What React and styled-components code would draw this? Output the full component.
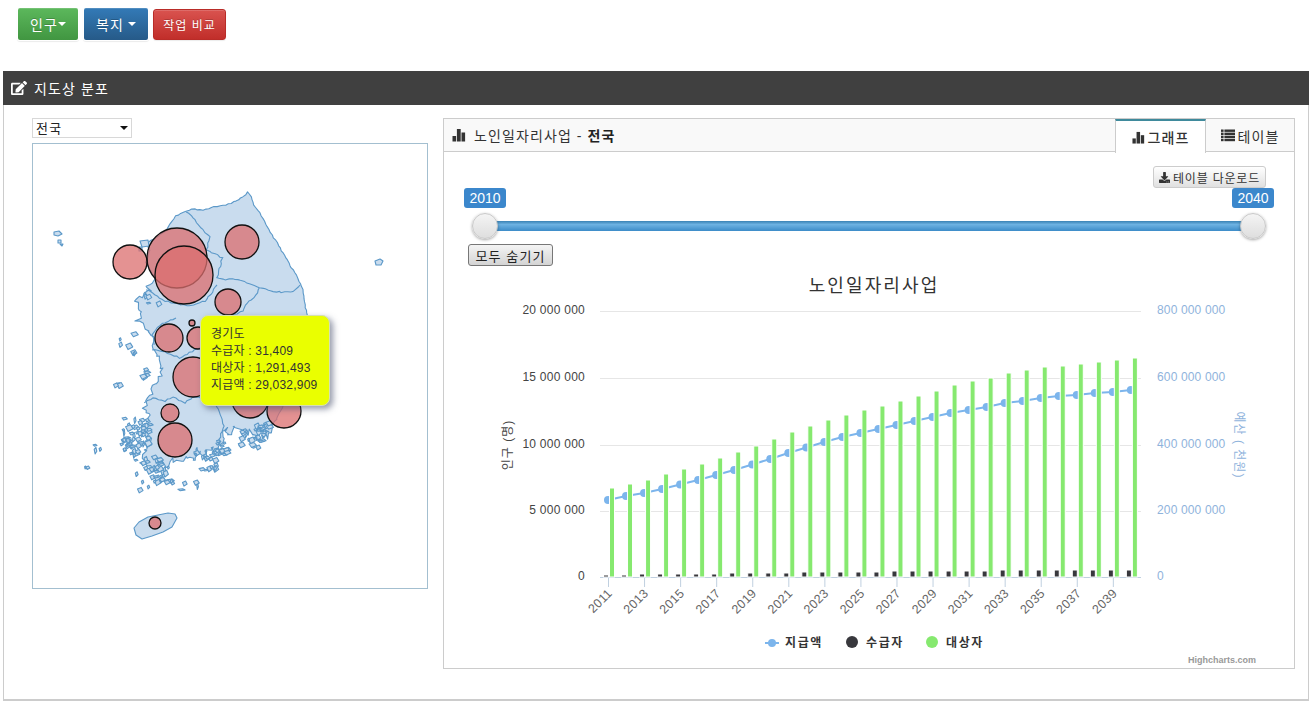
import React from "react";
import styled, { createGlobalStyle } from "styled-components";
import { FaEdit, FaDownload } from "react-icons/fa";

const FONT = `"Liberation Sans", "Noto Sans CJK KR", Arial, sans-serif`;

const GlobalStyle = createGlobalStyle`
  html, body {
    margin: 0;
    background: #fff;
    font-family: ${FONT};
    color: #333;
    overflow: hidden;
  }
  * { box-sizing: border-box; }
`;

const YEARS = Array.from({ length: 30 }, (_, i) => 2011 + i);
const GREEN_TOP = [488, 484, 480, 474, 469, 464, 458, 452, 446, 439, 432, 426, 420, 415, 410, 406, 401, 396, 391, 385, 381, 378, 373, 370, 367, 366, 364, 362, 360, 358];
const LINE_Y = [500, 496, 493, 489, 484.5, 480, 475, 470, 464.5, 459, 453, 447.5, 442, 437, 433, 429, 425, 421, 417, 413, 410, 407, 403, 401, 398, 396, 395, 393, 392, 390];
const DARK_H = [2, 2, 3, 3, 3, 3, 3, 4, 4, 4, 4, 5, 5, 5, 5, 5, 6, 6, 6, 6, 6, 6, 7, 7, 7, 7, 7, 7, 7, 7];
const LEFT_TICKS = [["20 000 000", 311], ["15 000 000", 378], ["10 000 000", 445], ["5 000 000", 511], ["0", 577]];
const RIGHT_TICKS = [["800 000 000", 311], ["600 000 000", 378], ["400 000 000", 445], ["200 000 000", 511], ["0", 577]];

const colX = (i) => 608 + i * 18.03;

const BUBBLES = [
  [177, 258, 30], [184, 275, 29], [130, 262, 17], [242, 242, 17], [228, 302, 13],
  [169, 338, 14], [192, 323, 3], [198, 338, 11], [193, 377, 20], [250, 400, 18],
  [284, 411, 17], [170, 413, 9], [175, 440, 17], [155, 523, 6],
];

const MAINLAND = [
  [248, 192], [251, 197], [254, 205], [260, 213], [266, 224], [272, 235], [277, 243], [283, 253], [290, 265], [296, 275],
  [302, 287], [304, 296], [306, 310], [309, 325], [311, 345], [309, 362], [306, 378], [300, 390], [293, 397], [285, 402],
  [279, 414], [273, 424], [270, 433], [266, 437], [262, 431], [257, 436], [250, 431], [245, 437], [240, 429], [234, 426],
  [229, 436], [226, 428], [221, 441], [216, 451], [211, 446], [205, 458], [199, 453], [194, 461], [188, 456], [181, 463],
  [172, 460], [166, 467], [160, 461], [154, 470], [146, 463], [142, 457], [146, 450], [150, 440], [146, 430], [150, 417],
  [143, 407], [152, 397], [150, 390], [157, 380], [162, 373], [158, 358], [155, 350], [150, 333], [137, 320], [142, 315],
  [135, 302], [150, 290], [146, 288], [152, 283], [155, 278], [150, 270], [146, 262], [150, 250], [146, 243], [156, 238],
  [166, 231], [170, 224], [176, 216], [183, 212], [192, 209], [203, 210], [214, 207], [226, 205], [236, 201], [243, 197],
];

const BORDERS = [
  [[187, 212], [195, 220], [203, 230], [210, 237], [207, 250], [222, 258], [217, 277], [225, 280], [232, 278], [247, 283], [260, 287], [273, 292], [293, 292], [300, 285]],
  [[147, 290], [165, 301], [178, 304], [190, 306], [205, 301], [217, 285]],
  [[260, 288], [254, 298], [247, 303], [243, 311], [232, 316], [220, 312]],
  [[153, 350], [165, 352], [180, 358], [195, 350], [205, 345]],
  [[145, 403], [153, 398], [165, 401], [173, 397], [185, 403], [193, 397], [210, 400]],
  [[212, 400], [220, 412], [224, 426], [218, 445]],
  [[155, 345], [152, 335], [160, 325], [176, 318]],
];

const JEJU = "M134 528 L139 522 L148 517 L158 515 L168 513 L175 514 L177 518 L172 527 L163 532 L152 536 L142 539 L136 535 Z";

// small island clusters off the west and south coast: cx, cy, spread, count
const CLUSTERS = [
  [134, 432, 14, 44], [128, 446, 8, 22], [148, 470, 14, 26], [160, 474, 8, 10], [205, 460, 12, 22], [222, 448, 8, 12],
  [250, 436, 12, 26], [262, 428, 6, 12], [150, 300, 8, 5], [143, 370, 6, 6], [131, 352, 5, 3], [125, 340, 7, 4],
  [118, 385, 5, 3], [96, 448, 4, 3], [85, 468, 2, 2], [196, 484, 3, 2], [175, 488, 8, 4], [142, 484, 6, 3],
];

const FAR_ISLES = [
  "M54 232 L59 231 L62 234 L58 236 L54 235 Z",
  "M58 240 L61 240 L61 243 L58 243 Z",
  "M60 244 L63 244 L62 246 Z",
  "M375 261 L380 259 L383 261 L381 265 L376 265 Z",
  "M139 247 L142 247 L142 251 L139 251 Z",
  "M140 241 L148 240 L149 246 L142 247 Z",
];

const makeRandom = (start) => {
  let seed = start;
  return () => {
    seed = (seed * 16807) % 2147483647;
    return seed / 2147483647;
  };
};

// breaks long edges into short ones so the outline looks like a real coast
const roughen = (points, closed, ampAt) => {
  const rnd = makeRandom(11);
  const out = [];
  const last = closed ? points.length : points.length - 1;
  for (let i = 0; i < last; i++) {
    const [ax, ay] = points[i];
    const [bx, by] = points[(i + 1) % points.length];
    const steps = Math.max(1, Math.round(Math.hypot(bx - ax, by - ay) / 3));
    for (let s = 0; s < steps; s++) {
      const x = ax + ((bx - ax) * s) / steps;
      const y = ay + ((by - ay) * s) / steps;
      const amp = ampAt(x, y);
      out.push(`${(x + (rnd() - 0.5) * amp).toFixed(1)} ${(y + (rnd() - 0.5) * amp).toFixed(1)}`);
    }
  }
  if (!closed) out.push(points[last].join(" "));
  return `M${out.join(" L")}${closed ? " Z" : ""}`;
};

const coastAmp = (x, y) => ((x < 235 && y > 285) || y > 415 ? 4.5 : 1);

const islandPaths = () => {
  const rnd = makeRandom(7);
  const out = [];
  CLUSTERS.forEach(([cx, cy, spread, count]) => {
    for (let i = 0; i < count; i++) {
      const x = cx + (rnd() - 0.5) * 2 * spread;
      const y = cy + (rnd() - 0.5) * 2 * spread;
      const w = 1 + rnd() * 4;
      const h = 1 + rnd() * 3;
      out.push(`M${x.toFixed(1)} ${y.toFixed(1)} l${w.toFixed(1)} ${(-h / 2).toFixed(1)} l${(w / 2).toFixed(1)} ${h.toFixed(1)} l${(-w).toFixed(1)} ${(h / 1.4).toFixed(1)} Z`);
    }
  });
  return out;
};

const BarIcon = ({ size = 14 }) => (
  <svg width={size} height={size} viewBox="0 0 13 14" fill="currentColor" aria-hidden="true">
    <rect x="0" y="8" width="3.6" height="5.5" />
    <rect x="4.4" y="1" width="3.8" height="12.5" />
    <rect x="9" y="4.5" width="3.6" height="9" />
  </svg>
);

const RowsIcon = () => (
  <svg width="14" height="13" viewBox="0 0 14 13" fill="currentColor" aria-hidden="true">
    {[0.5, 3.6, 6.7, 9.8].map((y) => (
      <g key={y}>
        <rect x="0" y={y} width="2.6" height="2.4" />
        <rect x="3.4" y={y} width="10.6" height="2.4" />
      </g>
    ))}
  </svg>
);

export default function App() {
  return (
    <>
      <GlobalStyle />
      <Toolbar>
        <MenuButton $tone="green" $width={62}>인구<Caret $gap={0} /></MenuButton>
        <MenuButton $tone="blue" $width={66}>복지<Caret $gap={4} /></MenuButton>
        <CompareButton>작업 비교</CompareButton>
      </Toolbar>

      <Panel>
        <PanelHead>
          <FaEdit size={16} />
          <span>지도상 분포</span>
        </PanelHead>
        <PanelBody>
          <MapColumn>
            <RegionSelect>
              <span>전국</span>
              <SelectArrow />
            </RegionSelect>
            <MapBox>
              <MapSvg viewBox="33 144 394 444">
                <g fill="#c9dcee" stroke="#5b98c8" strokeWidth="1.1" strokeLinejoin="round">
                  <path d={roughen(MAINLAND, true, coastAmp)} />
                  <path d={JEJU} />
                  {FAR_ISLES.map((d) => <path key={d} d={d} />)}
                  {islandPaths().map((d, i) => <path key={i} d={d} />)}
                </g>
                <g fill="none" stroke="#5b98c8" strokeWidth="1.1">
                  {BORDERS.map((points, i) => <path key={i} d={roughen(points, false, () => 1.6)} />)}
                </g>
                <g fill="#db6e6e" fillOpacity="0.75" stroke="#111" strokeWidth="1.3">
                  {BUBBLES.map(([cx, cy, r]) => <circle key={`${cx}-${cy}`} cx={cx} cy={cy} r={r} />)}
                </g>
              </MapSvg>
              <Tooltip>
                <div>경기도</div>
                <div>수급자 : 31,409</div>
                <div>대상자 : 1,291,493</div>
                <div>지급액 : 29,032,909</div>
              </Tooltip>
            </MapBox>
          </MapColumn>

          <ChartPanel>
            <ChartHead>
              <ChartTitle>
                <BarIcon />
                <span>노인일자리사업 - <strong>전국</strong></span>
              </ChartTitle>
              <Tabs>
                <Tab $active><BarIcon size={13} />그래프</Tab>
                <Tab><RowsIcon />테이블</Tab>
              </Tabs>
            </ChartHead>

            <DownloadRow>
              <SmallButton><FaDownload size={11} />테이블 다운로드</SmallButton>
            </DownloadRow>

            <SliderBlock>
              <SliderLabels>
                <SliderLabel>2010</SliderLabel>
                <SliderLabel>2040</SliderLabel>
              </SliderLabels>
              <SliderRail>
                <SliderTrack />
                <Thumb $side="left" />
                <Thumb $side="right" />
              </SliderRail>
              <HideButton>모두 숨기기</HideButton>
            </SliderBlock>

            <ChartSvg viewBox="444 268 850 399">
              <ChartHeading x="874" y="292">노인일자리사업</ChartHeading>

              {LEFT_TICKS.slice(0, 4).map(([, y]) => (
                <line key={y} x1="600" x2="1141" y1={y + 0.5} y2={y + 0.5} stroke="#e6e6e6" />
              ))}
              <line x1="600" x2="1141" y1="577.5" y2="577.5" stroke="#c0d0e0" />
              {YEARS.filter((_, i) => i % 2 === 0).map((year, k) => (
                <line key={year} x1={colX(k * 2) + 0.5} x2={colX(k * 2) + 0.5} y1="577" y2="587" stroke="#c0d0e0" />
              ))}

              {LEFT_TICKS.map(([label, y]) => (
                <LeftTick key={y} x="585" y={y + 3}>{label}</LeftTick>
              ))}
              {RIGHT_TICKS.map(([label, y]) => (
                <RightTick key={y} x="1157" y={y + 3}>{label}</RightTick>
              ))}
              <AxisTitle x="512" y="445" transform="rotate(-90 512 445)">인구 (명)</AxisTitle>
              <AxisTitle $blue x="1235" y="445" transform="rotate(90 1235 445)">예산 ( 천원)</AxisTitle>

              <polyline
                points={LINE_Y.map((y, i) => `${colX(i)},${y}`).join(" ")}
                fill="none"
                stroke="#7cb5ec"
                strokeWidth="2"
              />
              {LINE_Y.map((y, i) => (
                <circle key={i} cx={colX(i)} cy={y} r="4" fill="#7cb5ec" />
              ))}

              {YEARS.map((year, i) => (
                <g key={year} stroke="#fff">
                  <rect x={colX(i) - 4.5} y={577 - DARK_H[i]} width="5" height={DARK_H[i]} fill="#38383d" />
                  <rect x={colX(i) + 1.5} y={GREEN_TOP[i]} width="5" height={577 - GREEN_TOP[i]} fill="#86e96f" />
                </g>
              ))}

              {YEARS.filter((_, i) => i % 2 === 0).map((year, k) => {
                const x = colX(k * 2) + 5;
                return (
                  <YearLabel key={year} x={x} y="594" transform={`rotate(-45 ${x} 594)`}>{year}</YearLabel>
                );
              })}

              <line x1="765" x2="779" y1="643" y2="643" stroke="#7cb5ec" strokeWidth="2" />
              <circle cx="772" cy="643" r="4" fill="#7cb5ec" />
              <LegendText x="785" y="647">지급액</LegendText>
              <circle cx="852" cy="642" r="6" fill="#38383d" />
              <LegendText x="866" y="647">수급자</LegendText>
              <circle cx="932" cy="642" r="6" fill="#86e96f" />
              <LegendText x="946" y="647">대상자</LegendText>

              <Credit x="1256" y="663">Highcharts.com</Credit>
            </ChartSvg>
          </ChartPanel>
        </PanelBody>
      </Panel>
    </>
  );
}

const TONES = {
  green: "linear-gradient(#5cb85c, #419641); border-color: #3e8f3e",
  blue: "linear-gradient(#337ab7, #265a88); border-color: #245580",
};

const Toolbar = styled.div`
  height: 71px;
  padding: 7px 0 0 17px;
  display: flex;
  align-items: flex-start;
  gap: 4px;
`;

const MenuButton = styled.button`
  width: ${(p) => p.$width}px;
  height: 34px;
  padding: 0;
  display: inline-flex;
  align-items: center;
  justify-content: center;
  font: 14px ${FONT};
  letter-spacing: 1px;
  color: #fff;
  background: ${(p) => TONES[p.$tone]};
  border: 1px solid;
  border-radius: 3px;
  text-shadow: 0 -1px 0 rgba(0, 0, 0, 0.2);
  box-shadow: inset 0 1px 0 rgba(255, 255, 255, 0.15), 0 1px 1px rgba(0, 0, 0, 0.08);
`;

const Caret = styled.i`
  width: 0;
  height: 0;
  margin-left: ${(p) => p.$gap}px;
  border-top: 4px solid #fff;
  border-left: 4px solid transparent;
  border-right: 4px solid transparent;
`;

const CompareButton = styled.button`
  width: 73px;
  height: 31px;
  margin-top: 2px;
  padding: 0;
  font: 12px ${FONT};
  letter-spacing: 1px;
  color: #fff;
  background: linear-gradient(#d9534f, #c12e2a);
  border: 1px solid #b92c28;
  border-radius: 3px;
  text-shadow: 0 -1px 0 rgba(0, 0, 0, 0.2);
  box-shadow: inset 0 1px 0 rgba(255, 255, 255, 0.15), 0 1px 1px rgba(0, 0, 0, 0.08);
`;

const Panel = styled.section`
  width: 1306px;
  margin-left: 3px;
`;

const PanelHead = styled.header`
  height: 34px;
  padding-left: 8px;
  display: flex;
  align-items: center;
  gap: 7px;
  background: #404040;
  color: #fff;
  font-size: 14px;
  letter-spacing: 1.1px;
`;

const PanelBody = styled.div`
  height: 596px;
  padding: 13px 0 0 28px;
  display: flex;
  align-items: flex-start;
  gap: 15px;
  border: 1px solid #ccc;
  border-top: 0;
  border-bottom-width: 2px;
`;

const MapColumn = styled.div`
  width: 396px;
  display: flex;
  flex-direction: column;
  gap: 5px;
`;

const RegionSelect = styled.div`
  width: 100px;
  height: 20px;
  padding: 0 3px 2px 3px;
  display: flex;
  align-items: center;
  justify-content: space-between;
  border: 1px solid #d8d8d8;
  font-size: 13px;
  letter-spacing: 1.2px;
  color: #222;
`;

const SelectArrow = styled.i`
  width: 0;
  height: 0;
  margin-top: 2px;
  border-top: 4px solid #111;
  border-left: 4px solid transparent;
  border-right: 4px solid transparent;
`;

const MapBox = styled.div`
  position: relative;
  height: 446px;
  border: 1px solid #a3bfd0;
`;

const MapSvg = styled.svg`
  display: block;
  width: 394px;
  height: 444px;
`;

const Tooltip = styled.div`
  position: absolute;
  left: 167px;
  top: 171px;
  width: 130px;
  height: 91px;
  padding: 10px 0 0 10px;
  background: #eaff00;
  border: 1px solid #d6e0b0;
  border-radius: 8px;
  box-shadow: 3px 3px 6px rgba(60, 70, 100, 0.55);
  font-size: 12px;
  line-height: 17px;
  letter-spacing: 0.2px;
  color: #333;
`;

const ChartPanel = styled.div`
  width: 852px;
  height: 551px;
  display: flex;
  flex-direction: column;
  border: 1px solid #ccc;
`;

const ChartHead = styled.div`
  height: 33px;
  flex: none;
  padding-left: 8px;
  display: flex;
  align-items: stretch;
  justify-content: space-between;
  background: #f9f9f9;
  border-bottom: 1px solid #ccc;
`;

const ChartTitle = styled.div`
  display: flex;
  align-items: center;
  gap: 8px;
  font-size: 14px;
  letter-spacing: 1.1px;
  color: #333;
  svg { color: #333; }
  strong { color: #222; }
`;

const Tabs = styled.div`
  display: flex;
`;

const Tab = styled.div`
  width: ${(p) => (p.$active ? 91 : 88)}px;
  height: ${(p) => (p.$active ? 34 : 33)}px;
  display: flex;
  align-items: center;
  justify-content: center;
  gap: 3px;
  font-size: 14px;
  letter-spacing: 1.1px;
  font-weight: ${(p) => (p.$active ? 500 : 400)};
  color: #333;
  background: ${(p) => (p.$active ? "#fff" : "transparent")};
  border-left: ${(p) => (p.$active ? "1px solid #ccc" : "0")};
  border-right: ${(p) => (p.$active ? "1px solid #ccc" : "0")};
  border-top: ${(p) => (p.$active ? "2px solid #3f8a9c" : "0")};
`;

const DownloadRow = styled.div`
  flex: none;
  height: 22px;
  margin-top: 14px;
  padding-right: 28px;
  display: flex;
  justify-content: flex-end;
`;

const SmallButton = styled.button`
  width: 113px;
  height: 22px;
  padding: 0;
  display: flex;
  align-items: center;
  justify-content: center;
  gap: 3px;
  font: 12px ${FONT};
  letter-spacing: 0.8px;
  color: #333;
  background: linear-gradient(#fff, #e0e0e0);
  border: 1px solid #ccc;
  border-radius: 3px;
`;

const SliderBlock = styled.div`
  flex: none;
  padding: 0 20px;
`;

const SliderLabels = styled.div`
  display: flex;
  justify-content: space-between;
`;

const SliderLabel = styled.span`
  width: 42px;
  height: 20px;
  display: flex;
  align-items: center;
  justify-content: center;
  background: #3b87cc;
  border-radius: 3px;
  color: #fff;
  font-size: 14px;
`;

const SliderRail = styled.div`
  position: relative;
  height: 26px;
  margin: 5px 21px 0;
  display: flex;
  align-items: center;
`;

const SliderTrack = styled.div`
  width: 100%;
  height: 10px;
  background: linear-gradient(#3a82b4, #6db2e2 35%, #3d8cc8);
`;

const Thumb = styled.span`
  position: absolute;
  top: 0;
  ${(p) => (p.$side === "left" ? "left: -13px;" : "right: -13px;")}
  width: 26px;
  height: 26px;
  border-radius: 50%;
  background: linear-gradient(#f4f4f4, #dedede);
  border: 1px solid #c8c8c8;
  box-shadow: 0 1px 3px rgba(0, 0, 0, 0.35);
`;

const HideButton = styled.button`
  display: block;
  width: 85px;
  height: 22px;
  margin: 5px 0 0 4px;
  padding: 0;
  font: 13px ${FONT};
  letter-spacing: 1.1px;
  color: #222;
  background: linear-gradient(#f4f4f4, #d4d4d4);
  border: 1px solid #777;
  border-radius: 3px;
`;

const ChartSvg = styled.svg`
  display: block;
  flex: none;
  width: 850px;
  height: 399px;
  margin-top: 2px;
`;

const ChartHeading = styled.text`
  font: 18px ${FONT};
  letter-spacing: 2.1px;
  fill: #333;
  text-anchor: middle;
`;

const LeftTick = styled.text`
  font: 12px ${FONT};
  letter-spacing: 0.25px;
  fill: #444;
  text-anchor: end;
`;

const RightTick = styled.text`
  font: 12px ${FONT};
  letter-spacing: 0.15px;
  fill: #8fb3dc;
`;

const AxisTitle = styled.text`
  font: 12px ${FONT};
  letter-spacing: 1px;
  fill: ${(p) => (p.$blue ? "#8fb3dc" : "#444")};
  text-anchor: middle;
`;

const YearLabel = styled.text`
  font: 12.5px ${FONT};
  letter-spacing: 0.3px;
  fill: #666;
  text-anchor: end;
`;

const LegendText = styled.text`
  font: bold 12px ${FONT};
  letter-spacing: 1.6px;
  fill: #333;
`;

const Credit = styled.text`
  font: bold 9px ${FONT};
  fill: #999;
  text-anchor: end;
`;
